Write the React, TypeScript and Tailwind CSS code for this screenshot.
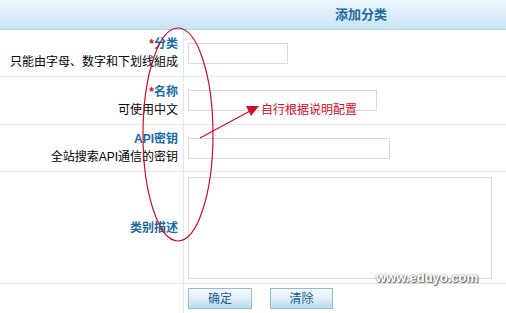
import React from 'react';

const rows = [
  { label: '分类', required: true, hint: '只能由字母、数字和下划线組成', input: 'w-[100px]', height: 'h-[47px]' },
  { label: '名称', required: true, hint: '可使用中文', input: 'w-[189px]', height: 'h-[48px]' },
  { label: 'API密钥', required: false, hint: '全站搜索API通信的密钥', input: 'w-[202px]', height: 'h-[47px]' },
];

export default function App() {
  return (
    <div
      className="relative w-[506px] h-[313px] overflow-hidden bg-white text-[12px] leading-[18px]"
      style={{ fontFamily: '"Liberation Sans", "Noto Sans CJK SC", sans-serif' }}
    >
      {/* Header */}
      <div className="h-[30px] flex items-center pl-[335px] bg-gradient-to-b from-[#eef7fd] to-[#c8e4f5] border-b border-[#b4d6ea]">
        <span className="font-bold text-[13px] text-[#1b6aa2]">添加分类</span>
      </div>

      {/* Form rows */}
      {rows.map((row) => (
        <div key={row.label} className={`flex ${row.height} border-b border-[#dde7ee]`}>
          <div className="w-[184px] shrink-0 flex flex-col justify-center items-end pr-[5px] border-r border-[#dde7ee]">
            <div className="font-bold text-[#1b6aa2]">
              {row.required && <span className="text-[#d0102a]">*</span>}
              {row.label}
            </div>
            <div className="text-black">{row.hint}</div>
          </div>
          <div className="flex-1 flex items-center pl-[4px]">
            <input className={`${row.input} h-[21px] border border-[#d3dbe1] bg-white outline-none`} />
          </div>
        </div>
      ))}

      <div className="flex h-[112px] border-b border-[#dde7ee]">
        <div className="w-[184px] shrink-0 flex items-center justify-end pr-[5px] border-r border-[#dde7ee]">
          <span className="font-bold text-[#1b6aa2]">类别描述</span>
        </div>
        <div className="flex-1 flex items-center pl-[4px]">
          <textarea className="w-[304px] h-[102px] border border-[#d3dbe1] bg-white outline-none resize-none" />
        </div>
      </div>

      <div className="flex h-[29px]">
        <div className="w-[184px] shrink-0 border-r border-[#dde7ee]" />
        <div className="flex-1 flex items-start pt-[4px] pl-[4px] gap-[18px]">
          <button className="w-[64px] h-[21px] border border-[#93bcd6] bg-gradient-to-b from-[#f4fafe] via-[#e3f0f9] to-[#b9d9ee] text-[#1b5f90] text-[12px] leading-none">
            确定
          </button>
          <button className="w-[63px] h-[21px] border border-[#93bcd6] bg-gradient-to-b from-[#f4fafe] via-[#e3f0f9] to-[#b9d9ee] text-[#1b5f90] text-[12px] leading-none">
            清除
          </button>
        </div>
      </div>

      {/* Annotation overlay */}
      <svg className="absolute left-0 top-0 pointer-events-none" width="506" height="313">
        <ellipse cx="178" cy="134.5" rx="35" ry="106.5" fill="none" stroke="#c8102e" strokeWidth="1.2" />
        <line x1="200" y1="138" x2="250" y2="111" stroke="#c8102e" strokeWidth="1.2" />
        <polygon points="259,106 246,106 251,116" fill="#d0102a" />
      </svg>
      <div className="absolute left-[261px] top-[101px] text-[12px] leading-[18px] text-[#d0102a]">
        自行根据说明配置
      </div>

      {/* Watermark */}
      <div
        className="absolute left-[376px] top-[270px] text-[13px] leading-[15px] font-bold text-white"
        style={{ fontFamily: '"Liberation Sans", sans-serif', textShadow: '0 0 2px #555, 1px 1px 1px #666' }}
      >
        www.eduyo.com
      </div>
    </div>
  );
}
